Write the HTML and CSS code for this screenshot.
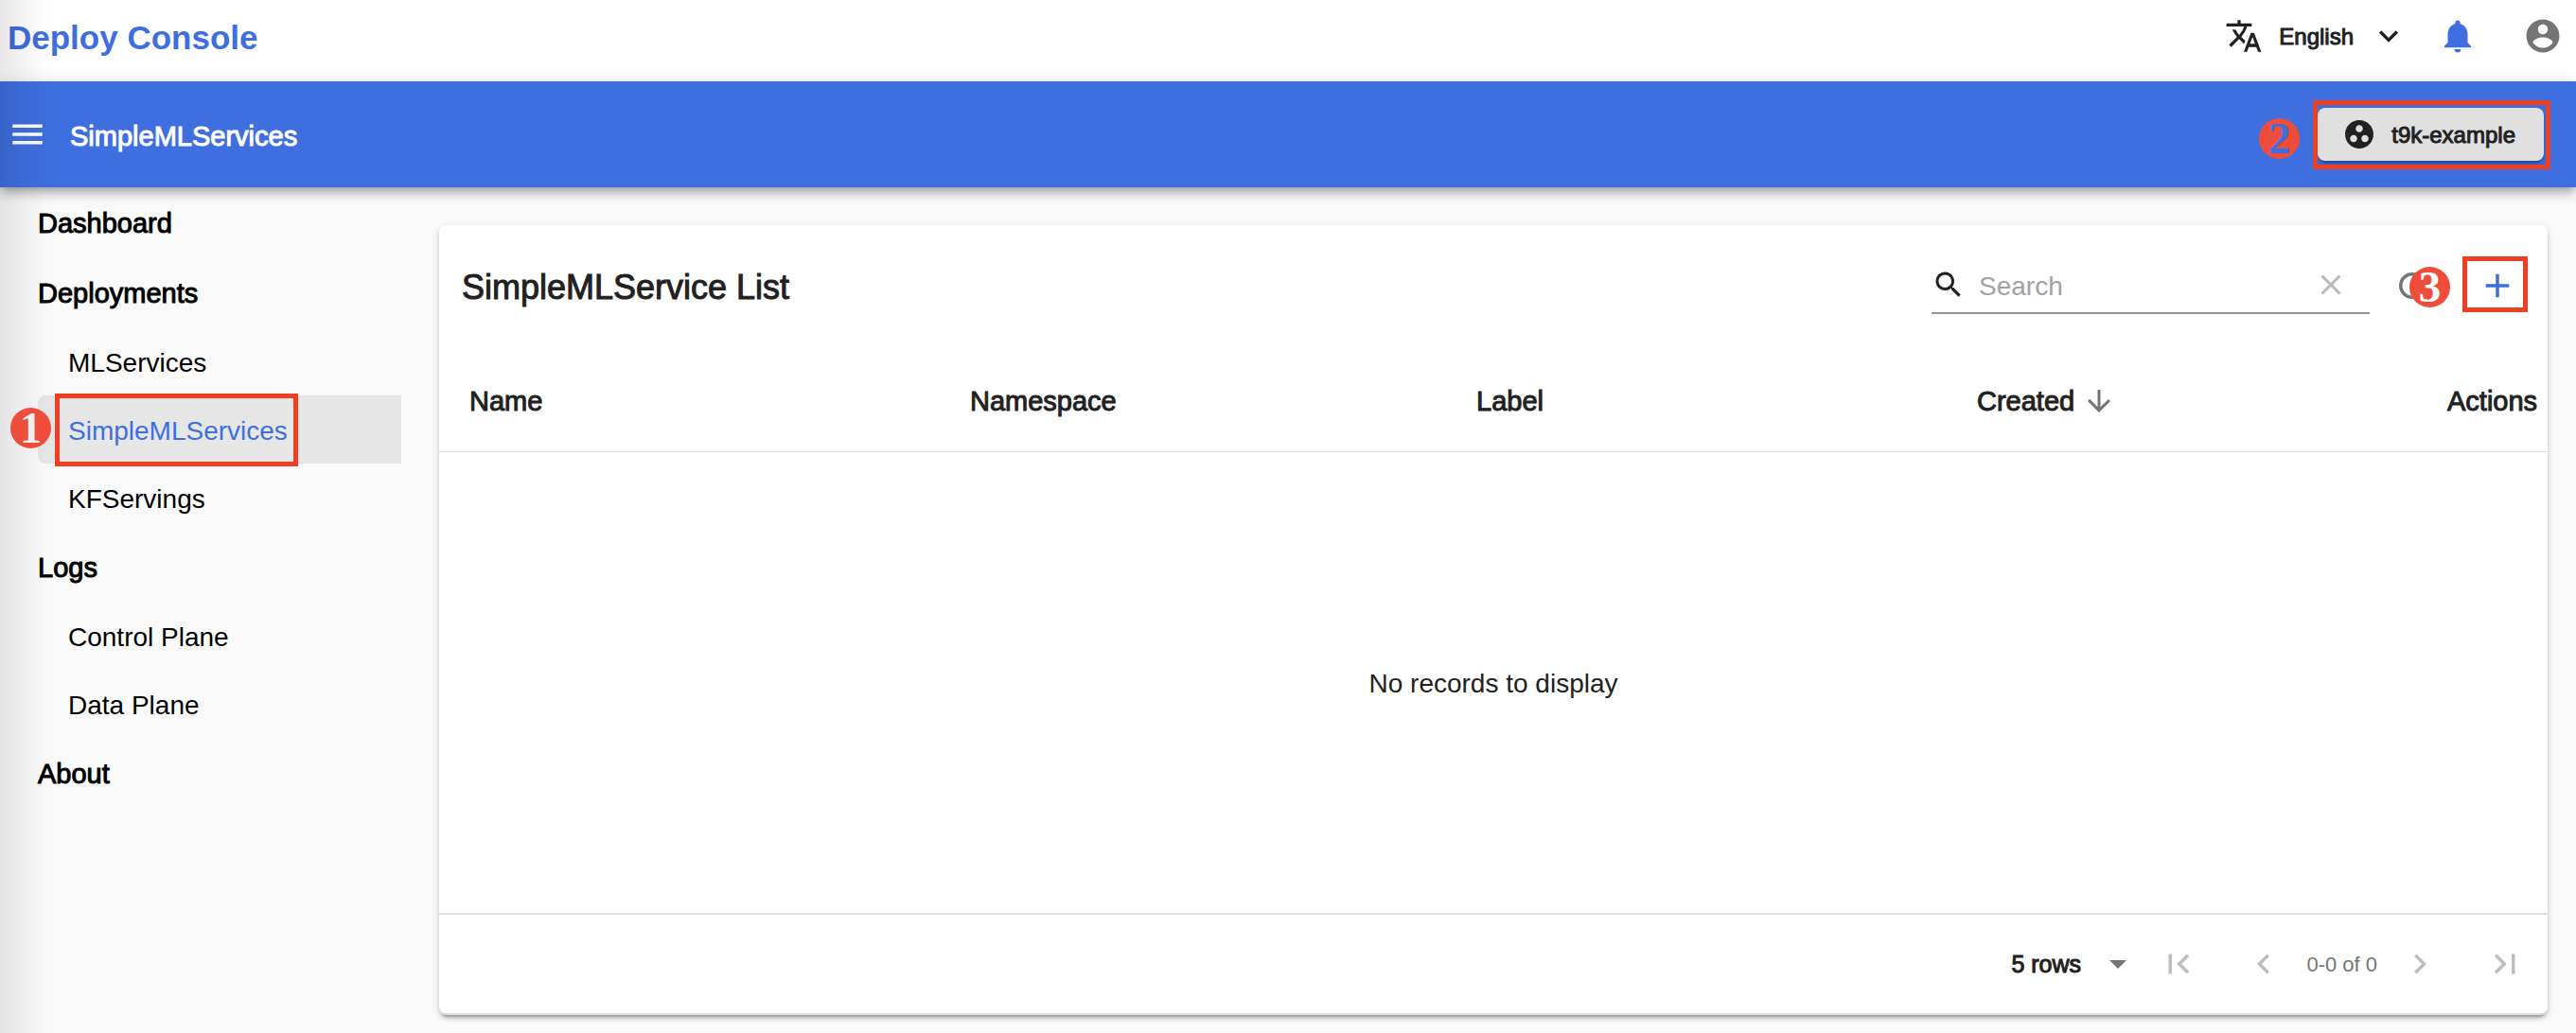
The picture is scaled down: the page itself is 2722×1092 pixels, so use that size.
FILE: index.html
```html
<!DOCTYPE html>
<html lang="en">
<head>
<meta charset="utf-8">
<meta name="viewport" content="width=device-width, initial-scale=1">
<title>Deploy Console</title>
<link rel="stylesheet" href="styles.css">
</head>
<body>
<header class="topbar">
  <a class="brand" href="#">Deploy Console</a>
  <div class="topbar-tools">
    <button class="language" type="button">
      <svg class="icon-md" viewBox="0 0 24 24" aria-hidden="true"><path d="M12.87 15.07l-2.54-2.51.03-.03c1.74-1.94 2.98-4.17 3.71-6.53H17V4h-7V2H8v2H1v1.99h11.17C11.5 7.92 10.44 9.75 9 11.35 8.07 10.32 7.3 9.19 6.69 8h-2c.73 1.63 1.73 3.17 2.98 4.56l-5.09 5.02L4 19l5-5 3.11 3.11.76-2.04zM18.5 10h-2L12 22h2l1.12-3h4.75L21 22h2l-4.5-12zm-2.62 7l1.62-4.33L19.12 17h-3.24z"/></svg>
      <span>English</span>
      <svg class="icon-md" viewBox="0 0 24 24" aria-hidden="true"><path d="M16.59 8.59L12 13.17 7.41 8.59 6 10l6 6 6-6z"/></svg>
    </button>
    <button class="icon-button bell" type="button" aria-label="Notifications">
      <svg class="icon-lg" viewBox="0 0 24 24"><path d="M12 22c1.1 0 2-.9 2-2h-4c0 1.1.89 2 2 2zm6-6v-5c0-3.07-1.64-5.64-4.5-6.32V4c0-.83-.67-1.5-1.5-1.5s-1.5.67-1.5 1.5v.68C7.63 5.36 6 7.92 6 11v5l-2 2v1h16v-1l-2-2z"/></svg>
    </button>
    <button class="icon-button" type="button" aria-label="Account">
      <svg class="icon-lg" viewBox="0 0 24 24"><path d="M12 2C6.48 2 2 6.48 2 12s4.48 10 10 10 10-4.48 10-10S17.52 2 12 2zm0 3c1.66 0 3 1.34 3 3s-1.34 3-3 3-3-1.34-3-3 1.34-3 3-3zm0 14.2c-2.5 0-4.71-1.28-6-3.22.03-1.99 4-3.08 6-3.08 1.99 0 5.97 1.09 6 3.08-1.29 1.94-3.5 3.22-6 3.22z"/></svg>
    </button>
  </div>
</header>

<div class="appbar">
  <button class="icon-button menu" type="button" aria-label="Menu">
    <svg class="icon-lg" viewBox="0 0 24 24"><path d="M3 18h18v-2H3v2zm0-5h18v-2H3v2zm0-7v2h18V6H3z"/></svg>
  </button>
  <h1 class="appbar-title">SimpleMLServices</h1>
  <div class="project">
    <button class="project-button" type="button">
      <svg class="icon-sm" viewBox="0 0 24 24" aria-hidden="true"><path d="M12 2C6.48 2 2 6.48 2 12s4.48 10 10 10 10-4.48 10-10S17.52 2 12 2zM8 17.5c-1.38 0-2.5-1.12-2.5-2.5s1.12-2.5 2.5-2.5 2.5 1.12 2.5 2.5-1.12 2.5-2.5 2.5zM9.5 8c0-1.38 1.12-2.5 2.5-2.5s2.5 1.12 2.5 2.5-1.12 2.5-2.5 2.5S9.5 9.38 9.5 8zm6.5 9.500c-1.38 0-2.5-1.12-2.5-2.5s1.12-2.5 2.5-2.5 2.5 1.12 2.5 2.5-1.12 2.5-2.5 2.5z"/></svg>
      <span>t9k-example</span>
    </button>
    <span class="outline outline-project"></span>
    <span class="step step-project">2</span>
  </div>
</div>

<div class="layout">
  <nav class="sidebar" aria-label="Main">
    <a class="nav-group" href="#">Dashboard</a>
    <a class="nav-group" href="#">Deployments</a>
    <a class="nav-item" href="#">MLServices</a>
    <a class="nav-item active" href="#" aria-current="page">SimpleMLServices
      <span class="outline outline-nav"></span>
      <span class="step step-nav">1</span>
    </a>
    <a class="nav-item" href="#">KFServings</a>
    <a class="nav-group" href="#">Logs</a>
    <a class="nav-item" href="#">Control Plane</a>
    <a class="nav-item" href="#">Data Plane</a>
    <a class="nav-group" href="#">About</a>
  </nav>

  <main class="card">
    <div class="toolbar">
      <h2 class="card-title">SimpleMLService List</h2>
      <div class="search">
        <svg class="icon-sm" viewBox="0 0 24 24" aria-hidden="true"><path d="M15.5 14h-.79l-.28-.27C15.41 12.59 16 11.11 16 9.500 16 5.91 13.09 3 9.5 3S3 5.910 3 9.500 5.910 16 9.500 16c1.61 0 3.09-.59 4.230-1.570l.27.28v.79l5 4.990L20.490 19l-4.990-5zm-6 0C7.010 14 5 11.990 5 9.500S7.010 5 9.500 5 14 7.010 14 9.500 11.990 14 9.500 14z"/></svg>
        <input class="search-input" type="text" placeholder="Search" aria-label="Search">
        <button class="clear" type="button" aria-label="Clear search">
          <svg class="icon-sm" viewBox="0 0 24 24"><path d="M19 6.410L17.590 5 12 10.590 6.410 5 5 6.410 10.590 12 5 17.590 6.410 19 12 13.410 17.590 19 19 17.590 13.410 12z"/></svg>
        </button>
      </div>
      <button class="icon-button wide" type="button" aria-label="Refresh">
        <svg class="icon-lg" viewBox="0 0 24 24"><path d="M17.65 6.35C16.2 4.9 14.21 4 12 4c-4.42 0-7.99 3.58-7.99 8s3.57 8 7.99 8c3.73 0 6.84-2.55 7.73-6h-2.08c-.82 2.33-3.04 4-5.65 4-3.31 0-6-2.69-6-6s2.69-6 6-6c1.66 0 3.14.69 4.22 1.78L13 11h7V4l-2.35 2.35z"/></svg>
      </button>
      <div class="add">
        <button class="icon-button wide add-button" type="button" aria-label="Add">
          <svg class="icon-lg" viewBox="0 0 24 24"><path d="M19 13h-6v6h-2v-6H5v-2h6V5h2v6h6v2z"/></svg>
        </button>
        <span class="outline outline-add"></span>
        <span class="step step-add">3</span>
      </div>
    </div>

    <table class="list">
      <colgroup>
        <col class="col-name"><col class="col-namespace"><col><col><col class="col-actions">
      </colgroup>
      <thead>
        <tr>
          <th scope="col">Name</th>
          <th scope="col">Namespace</th>
          <th scope="col">Label</th>
          <th scope="col" aria-sort="descending">
            <span class="sorted">Created
              <svg class="icon-sm" viewBox="0 0 24 24" aria-hidden="true"><path d="M20 12l-1.410-1.410L13 16.170V4h-2v12.170l-5.580-5.590L4 12l8 8 8-8z"/></svg>
            </span>
          </th>
          <th class="actions" scope="col">Actions</th>
        </tr>
      </thead>
      <tbody>
        <tr><td class="empty" colspan="5">No records to display</td></tr>
      </tbody>
    </table>

    <div class="pager">
      <div class="rows">
        <select class="rows-select" aria-label="Rows per page">
          <option>5 rows</option>
          <option>10 rows</option>
          <option>20 rows</option>
        </select>
        <svg class="rows-arrow" viewBox="0 0 18 9" aria-hidden="true"><path d="M0 0h18l-9 9z"/></svg>
      </div>
      <button class="icon-button wide muted" type="button" aria-label="First page">
        <svg class="icon-lg" viewBox="0 0 24 24"><path d="M18.410 16.590L13.820 12l4.590-4.590L17 6l-6 6 6 6zM6 6h2v12H6z"/></svg>
      </button>
      <button class="icon-button wide muted" type="button" aria-label="Previous page">
        <svg class="icon-lg" viewBox="0 0 24 24"><path d="M15.410 7.410L14 6l-6 6 6 6 1.410-1.410L10.830 12z"/></svg>
      </button>
      <span class="range">0-0 of 0</span>
      <button class="icon-button wide muted" type="button" aria-label="Next page">
        <svg class="icon-lg" viewBox="0 0 24 24"><path d="M10 6L8.590 7.410 13.170 12l-4.580 4.590L10 18l6-6z"/></svg>
      </button>
      <button class="icon-button wide muted" type="button" aria-label="Last page">
        <svg class="icon-lg" viewBox="0 0 24 24"><path d="M5.590 7.410L10.180 12l-4.590 4.590L7 18l6-6-6-6zM16 6h2v12h-2z"/></svg>
      </button>
    </div>
  </main>
</div>
</body>
</html>
```
FILE: styles.css
```css
* {
  box-sizing: border-box;
}

body {
  margin: 0;
  background: #fafafa;
  color: #212121;
  font-family: "Liberation Sans", Arial, Helvetica, sans-serif;
  font-size: 28px;
  line-height: 36px;
}

body::after {
  content: "";
  position: fixed;
  top: 0;
  bottom: 0;
  left: 0;
  width: 60px;
  background: linear-gradient(to right, rgba(0, 0, 0, 0.09), rgba(0, 0, 0, 0.05) 35%, rgba(0, 0, 0, 0.01) 75%, transparent);
  pointer-events: none;
  z-index: 5;
}

button,
input,
select {
  margin: 0;
  padding: 0;
  border: 0;
  background: none;
  color: inherit;
  font: inherit;
}

button {
  display: flex;
  align-items: center;
  cursor: pointer;
}

a {
  color: inherit;
  text-decoration: none;
}

h1,
h2 {
  margin: 0;
}

svg {
  display: block;
  flex: none;
  fill: currentColor;
}

.icon-sm {
  width: 36px;
  height: 36px;
}

.icon-md {
  width: 40px;
  height: 40px;
}

.icon-lg {
  width: 42px;
  height: 42px;
}

/* Medium weight, heavier than regular and lighter than bold */
.language,
.appbar-title,
.project-button,
.nav-group,
.card-title,
.list th,
.rows-select {
  font-weight: 400;
  -webkit-text-stroke: 1px currentColor;
}

.icon-button {
  justify-content: center;
  color: #757575;
}

.wide {
  width: 90px;
  height: 90px;
}

.muted {
  color: #bdbdbd;
}

/* Top bar */
.topbar {
  display: flex;
  align-items: center;
  justify-content: space-between;
  height: 86px;
  padding: 0 14px 10px 8px;
  background: #fff;
}

.brand {
  padding-top: 4px;
  color: #3f6fde;
  font-size: 35px;
  font-weight: 700;
}

.topbar-tools {
  display: flex;
  align-items: center;
  gap: 48px;
}

.language {
  gap: 17px;
  margin-right: -16px;
  font-size: 24px;
}

.language span,
.project-button span {
  padding-top: 2px;
}

.bell {
  color: #3f6fde;
}

/* Blue bar */
.appbar {
  position: relative;
  display: flex;
  align-items: center;
  height: 112px;
  padding: 0 34px 0 8px;
  background: #3f6fde;
  box-shadow: 0 4px 8px -2px rgba(0, 0, 0, 0.2), 0 8px 10px rgba(0, 0, 0, 0.14), 0 2px 20px rgba(0, 0, 0, 0.12);
  z-index: 1;
}

.menu {
  color: #fff;
}

.appbar-title {
  flex: 1;
  margin-left: 24px;
  padding-top: 3px;
  color: #fff;
  font-size: 29px;
}

.project {
  position: relative;
}

.project-button {
  gap: 16px;
  height: 56px;
  padding: 0 30px 0 26px;
  border-radius: 8px;
  background: #e0e0e0;
  box-shadow: 0 6px 2px -4px rgba(0, 0, 0, 0.2), 0 4px 4px rgba(0, 0, 0, 0.14), 0 2px 10px rgba(0, 0, 0, 0.12);
  font-size: 24px;
}

/* Guide marks laid over the controls */
.outline {
  position: absolute;
  border: 5px solid #ec3f24;
  pointer-events: none;
}

.step {
  position: absolute;
  width: 43px;
  height: 43px;
  border-radius: 50%;
  background: #ee4d3c;
  font-family: "Liberation Serif", "Times New Roman", serif;
  font-size: 47px;
  font-weight: 700;
  line-height: 43px;
  text-align: center;
  pointer-events: none;
}

.outline-project {
  inset: -8px -7px -9px -5px;
}

.step-project {
  top: 11px;
  right: calc(100% + 19px);
  color: #3f6fde;
}

.outline-nav {
  top: -2px;
  bottom: -3px;
  left: 18px;
  width: 257px;
}

.step-nav {
  top: 13px;
  left: -29px;
  color: #f0f0f0;
  z-index: 6;
}

.outline-add {
  inset: 14px 13px 17px 8px;
}

.step-add {
  top: 25px;
  right: 95px;
  color: #fff;
}

/* Page */
.layout {
  display: flex;
  align-items: flex-start;
  gap: 40px;
  padding: 0 30px 19px 40px;
}

.sidebar {
  flex: none;
  display: flex;
  flex-direction: column;
  width: 384px;
  color: #000;
}

.nav-group {
  padding-top: 3px;
  font-size: 29px;
  line-height: 71px;
}

.nav-item {
  padding: 3px 0 0 32px;
  line-height: 69px;
}

.active {
  position: relative;
  border-radius: 8px 0 0 8px;
  background: #e6e6e6;
  color: #3f6fde;
}

.card {
  flex: 1;
  min-width: 0;
  margin-top: 40px;
  border-bottom: 2px solid #e0e0e0;
  border-radius: 8px;
  background: #fff;
  box-shadow: 0 6px 2px -4px rgba(0, 0, 0, 0.2), 0 4px 4px rgba(0, 0, 0, 0.14), 0 2px 10px rgba(0, 0, 0, 0.12);
}

.toolbar {
  display: flex;
  align-items: center;
  height: 130px;
  padding: 0 8px 2px 24px;
}

.card-title {
  flex: 1;
  padding-top: 4px;
  font-size: 36px;
}

.search {
  display: flex;
  align-items: center;
  width: 463px;
  height: 60px;
  border-bottom: 2px solid #949494;
}

.search-input {
  flex: 1;
  min-width: 0;
  margin-left: 14px;
  padding-top: 3px;
  outline: 0;
}

.search-input::placeholder {
  color: #a2a2a2;
  opacity: 1;
}

.clear {
  margin-right: 23px;
  color: #b9b9b9;
}

.add {
  position: relative;
}

.add-button {
  color: #3f6fde;
}

/* Table */
.list {
  width: 100%;
  table-layout: fixed;
  border-collapse: collapse;
}

.col-name {
  width: 529px;
}

.col-namespace {
  width: 535px;
}

.col-actions {
  width: 106px;
}

.list th {
  height: 109px;
  padding: 3px 0 0 32px;
  border-bottom: 1px solid #e0e0e0;
  font-size: 29px;
  text-align: left;
}

.list .actions {
  padding-left: 0;
}

.sorted {
  display: flex;
  align-items: center;
  gap: 8px;
}

.sorted svg {
  color: #757575;
}

.empty {
  height: 488px;
  padding: 3px 0 0;
  text-align: center;
}

.pager {
  display: flex;
  align-items: center;
  justify-content: flex-end;
  height: 106px;
  border-top: 2px solid #e0e0e0;
}

.rows {
  display: grid;
  align-items: center;
  margin-right: 10px;
}

.rows-select,
.rows-arrow {
  grid-area: 1 / 1;
}

.rows-select {
  width: 122px;
  appearance: none;
  font-size: 25px;
}

.rows-arrow {
  justify-self: end;
  width: 18px;
  height: 9px;
  color: #757575;
  pointer-events: none;
}

.range {
  padding-top: 2px;
  color: #757575;
  font-size: 22px;
}
```
